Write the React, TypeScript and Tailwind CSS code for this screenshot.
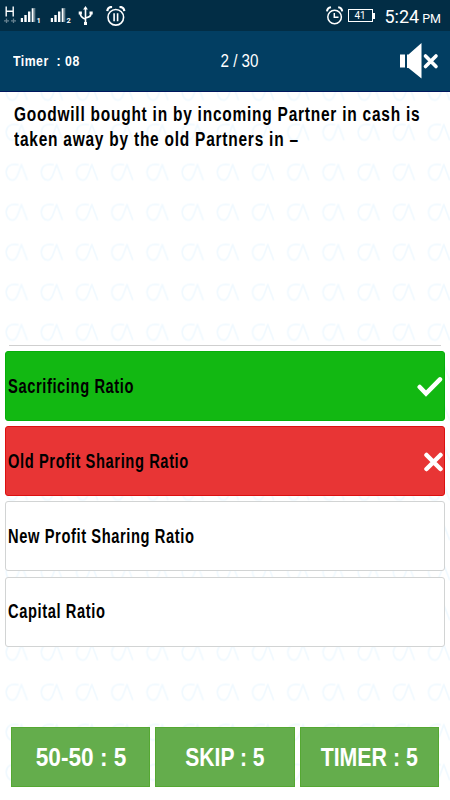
import React from 'react';

type Option = {
  label: string;
  state: 'correct' | 'wrong' | 'idle';
};

const options: Option[] = [
  { label: 'Sacrificing Ratio', state: 'correct' },
  { label: 'Old Profit Sharing Ratio', state: 'wrong' },
  { label: 'New Profit Sharing Ratio', state: 'idle' },
  { label: 'Capital Ratio', state: 'idle' },
];

const lifelines = [
  { label: '50-50 : 5', width: 'scale-x-[0.87]' },
  { label: 'SKIP : 5', width: 'scale-x-[0.81]' },
  { label: 'TIMER : 5', width: 'scale-x-[0.82]' },
];

const optionStyles = {
  correct: 'bg-[#12b812] border-[#06ae0a]',
  wrong: 'bg-[#e83535] border-[#dc1010]',
  idle: 'bg-white border-[#d2d4d4]',
};

const SignalIcon = ({ sim }: { sim: number }) => (
  <svg width="22" height="20" viewBox="0 0 22 20" fill="#fff">
    <path d="M.8 12h2.200v4H.8zM4.300 9h2.400v7H4.300zM8 5.500h2.400V16H8zM11.700 2.300h1.800V16h-1.800z" />
    <path d="M13.500 2h1.800v14h-1.800z" opacity=".4" />
    <text x="16.6" y="17" fontSize="7.5" fontWeight="700" fontFamily="Roboto, sans-serif">{sim}</text>
  </svg>
);

const StatusBar = () => (
  <div className="flex h-[31px] items-start justify-between bg-[#022d45] text-white font-['Roboto',sans-serif]">
    <div className="flex pt-[6px]">
      <svg className="ml-[3px]" width="14" height="18" viewBox="0 0 14 18" fill="none" stroke="#fff">
        <path d="M3.2.5v10M10.2.5v10M3.2 5.3h7" strokeWidth="1.4" />
        <path d="M1 14.8h5M3.5 12.6v4.4M8 14.8h5M10.5 12.6v4.4" strokeWidth="1.3" opacity=".4" />
      </svg>
      <div className="ml-[3px]"><SignalIcon sim={1} /></div>
      <div className="ml-[8px]"><SignalIcon sim={2} /></div>
      <svg className="ml-[6px]" width="16" height="20" viewBox="0 0 16 20" fill="none" stroke="#fff" strokeWidth="1.6">
        <path d="M7.5 2v15M2.3 7.5c0 3.5 2 4.5 5.2 5.8M13 7.5c0 3-1.8 3.7-5.5 4.5" />
        <path d="M7.5 0l2.4 3.6H5.1zM6 16h3v3H6zM.7 5.5h3.2v3H.7zM11.5 5.5h3.2v3h-3.2z" fill="#fff" stroke="none" />
      </svg>
      <svg className="ml-[12px]" width="20" height="20" viewBox="0 0 20 20" fill="none" stroke="#fff" strokeWidth="1.6">
        <circle cx="9.8" cy="11.3" r="7.8" />
        <path d="M1.300 5.2C1.500 2.5 3.300.9 6.100.9M18.300 5.2C18.100 2.5 16.300.9 13.500.9" strokeWidth="2.2" />
        <path d="M8.100 7.3v8M11.600 7.3v8" />
      </svg>
    </div>
    <div className="flex pt-[6px]">
      <svg width="18" height="20" viewBox="0 0 18 20" fill="none" stroke="#fff" strokeWidth="1.5">
        <circle cx="8.6" cy="11" r="6.8" />
        <path d="M1 5.3C1.2 3 2.8 1.6 5 1.3M16.2 5.3c-.2-2.3-1.8-3.7-4-4" strokeWidth="2" />
        <path d="M8.3 7v4.3h4.2" />
      </svg>
      <div className="ml-[4px] mt-[3px] flex h-[13px] w-[25px] items-center justify-center border-[1.5px] border-white text-[10px] leading-none">41</div>
      <div className="mt-[7px] h-[6px] w-[2px] bg-white" />
      <div className="ml-[10px] mr-[9px] text-[18px] leading-[22px] whitespace-nowrap">
        5:24 <span className="-ml-[1.5px] text-[12.5px]">PM</span>
      </div>
    </div>
  </div>
);

const Header = () => (
  <header className="grid h-[61px] grid-cols-3 items-center border-b-[1.5px] border-[#00175e] bg-[#023e62] text-white">
    <div className="ml-[13px] origin-left scale-x-[0.82] text-[15px] font-bold tracking-[0.6px] whitespace-pre">Timer  : 08</div>
    <div className="ml-[29px] scale-x-[0.8] text-center text-[19px]">2 / 30</div>
    <svg className="mr-[10px] justify-self-end" width="42" height="38" viewBox="0 0 42 38" fill="#fff">
      <path d="M2 12.5h5v13H2zM9 12.5h1.5L23.5 1v35.5L10.5 26H9z" />
      <path d="M27.5 14l10.5 10.5M38 14l-10.5 10.5" stroke="#fff" strokeWidth="3.6" strokeLinecap="round" />
    </svg>
  </header>
);

const Watermark = () => (
  <svg className="absolute inset-0 h-full w-full" aria-hidden="true">
    <defs>
      <pattern id="ca" x="5" y="-9.5" width="35.2" height="40" patternUnits="userSpaceOnUse">
        <path
          d="M13.5 2.3C5 .2 1.2 5 1.2 9.5c0 4.8 3 8.2 6.3 8.2 3.5 0 4.5-3 8.9-15.7L22.3 17.8"
          fill="none"
          stroke="#f0f9ff"
          strokeWidth="1.7"
          strokeLinejoin="round"
        />
      </pattern>
    </defs>
    <rect width="100%" height="100%" fill="url(#ca)" />
  </svg>
);

const CheckIcon = () => (
  <svg width="26" height="22" viewBox="0 0 26 22" fill="none" stroke="#fff" strokeWidth="4.5" strokeLinecap="round">
    <path d="M2.7 11l6.3 6.5L23 3.3" />
  </svg>
);

const CrossIcon = () => (
  <svg width="20" height="20" viewBox="0 0 20 20" fill="none" stroke="#fff" strokeWidth="4.5" strokeLinecap="round">
    <path d="M2.5 3l14 14M16.5 3l-14 14" />
  </svg>
);

const App = () => {
  return (
    <div className="flex h-[800px] w-[450px] flex-col overflow-hidden bg-white font-['Liberation_Sans',sans-serif]">
      <StatusBar />
      <Header />
      <main className="relative flex-1">
        <Watermark />
        <div className="relative flex h-full flex-col">
          <div className="mx-[9px] h-[254px] border-b border-[#cfcfcf] pl-[5px] pt-[10px]">
            <p className="w-max origin-left scale-x-[0.773] text-[20px] leading-[25px] font-bold tracking-[1px] whitespace-nowrap text-black">
              Goodwill bought in by incoming Partner in cash is
              <br />
              taken away by the old Partners in –
            </p>
          </div>
          <div className="mx-[5px] mt-[5px] flex flex-col gap-[5.2px]">
            {options.map((option) => (
              <button
                key={option.label}
                className={`flex h-[70px] items-center justify-between rounded-[3px] border pl-[2px] pt-px text-left text-[19.5px] font-bold tracking-[0.8px] text-black ${optionStyles[option.state]}`}
              >
                <span className="origin-left scale-x-[0.753]">{option.label}</span>
                {option.state === 'correct' && <span className="mr-[1px]"><CheckIcon /></span>}
                {option.state === 'wrong' && <CrossIcon />}
              </button>
            ))}
          </div>
          <div className="mx-[11px] mt-[80px] grid grid-cols-3 gap-[5px]">
            {lifelines.map(({ label, width }) => (
              <button
                key={label}
                className="flex h-[60px] min-w-0 items-center justify-center border border-[#55a832] bg-[#64ad4c] pt-[2px] text-[26px] font-bold whitespace-nowrap text-white"
              >
                <span className={width}>{label}</span>
              </button>
            ))}
          </div>
        </div>
      </main>
    </div>
  );
};

export default App;
